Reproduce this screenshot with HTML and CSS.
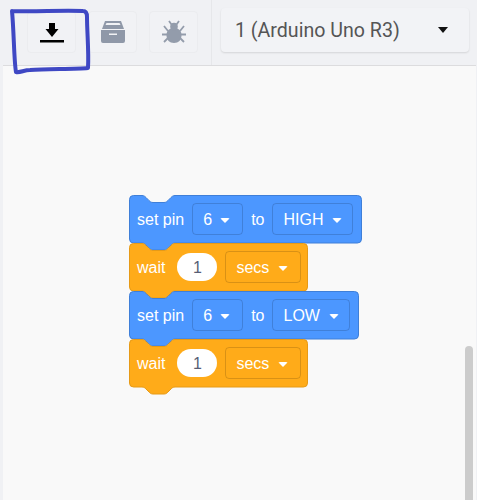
FILE: index.html
```html
<!DOCTYPE html>
<html lang="en">
<head>
    <meta charset="UTF-8">
    <title>Arduino Blocks</title>
    <link rel="stylesheet" href="styles.css">
</head>
<body>
    <div class="toolbar">
        <div class="tool-buttons">
            <button class="tool-button">
                <svg class="tool-icon" viewBox="0 0 24 24"><path fill="#000" d="M9 3h6v6h3.500l-6.500 8-6.500-8H9zM0 20h24v2.400H0z"/></svg>
            </button>
            <button class="tool-button">
                <svg class="tool-icon" viewBox="0 0 24 24"><path fill="#8f98a8" fill-rule="evenodd" d="M4 1h16l3 8H1zM5.500 3l-1 2h15l-1-2zM0 10h24v11a2 2 0 0 1-2 2H2a2 2 0 0 1-2-2zM8 13.500V15h8v-1.500z"/></svg>
            </button>
            <button class="tool-button">
                <svg class="tool-icon" viewBox="0 0 24 24"><g fill="#939cab"><path d="M12 8c5 0 7.500 3 7.500 7 0 5-3 8-7.500 8s-7.500-3-7.500-8c0-4 2.500-7 7.500-7z"/><circle cx="12" cy="6.500" r="3.800"/></g><path fill="none" stroke="#939cab" stroke-width="1.800" d="M7 1l2.500 3.500M17 1l-2.500 3.500M2 6l4 5M22 6l-4 5M0 14.500h6M24 14.500h-6M2 22l4-4M22 22l-4-4"/></svg>
            </button>
        </div>
        <div class="board-wrap">
            <div class="board-select">
                <span>1 (Arduino Uno R3)</span>
                <span class="board-caret"></span>
            </div>
        </div>
    </div>

    <div class="workspace">
        <div class="stack">
            <div class="block block-blue">
                <svg class="block-shape" width="233" height="56" viewBox="0 0 233 56"><path d="M4.500.5H13c2 0 3 1 4 2l3 3c1 1 2 2 4 2h11c2 0 3-1 4-2l3-3c1-1 2-2 4-2H228.500a4 4 0 0 1 4 4V44a4 4 0 0 1-4 4H46c-2 0-3 1-4 2l-3 3c-1 1-2 2-4 2H24c-2 0-3-1-4-2l-3-3c-1-1-2-2-4-2H4.500a4 4 0 0 1-4-4V4.500a4 4 0 0 1 4-4z"/></svg>
                <span class="block-text">set pin</span>
                <span class="field field-pin">6<i class="caret"></i></span>
                <span class="block-text">to</span>
                <span class="field">HIGH<i class="caret"></i></span>
            </div>
            <div class="block block-orange">
                <svg class="block-shape" width="179" height="56" viewBox="0 0 179 56"><path d="M4.500.5H13c2 0 3 1 4 2l3 3c1 1 2 2 4 2h11c2 0 3-1 4-2l3-3c1-1 2-2 4-2H174.500a4 4 0 0 1 4 4V44a4 4 0 0 1-4 4H46c-2 0-3 1-4 2l-3 3c-1 1-2 2-4 2H24c-2 0-3-1-4-2l-3-3c-1-1-2-2-4-2H4.500a4 4 0 0 1-4-4V4.500a4 4 0 0 1 4-4z"/></svg>
                <span class="block-text">wait</span>
                <span class="number">1</span>
                <span class="field field-secs">secs<i class="caret"></i></span>
            </div>
            <div class="block block-blue">
                <svg class="block-shape" width="230" height="56" viewBox="0 0 230 56"><path d="M4.500.5H13c2 0 3 1 4 2l3 3c1 1 2 2 4 2h11c2 0 3-1 4-2l3-3c1-1 2-2 4-2H225.500a4 4 0 0 1 4 4V44a4 4 0 0 1-4 4H46c-2 0-3 1-4 2l-3 3c-1 1-2 2-4 2H24c-2 0-3-1-4-2l-3-3c-1-1-2-2-4-2H4.500a4 4 0 0 1-4-4V4.500a4 4 0 0 1 4-4z"/></svg>
                <span class="block-text">set pin</span>
                <span class="field field-pin">6<i class="caret"></i></span>
                <span class="block-text">to</span>
                <span class="field">LOW<i class="caret"></i></span>
            </div>
            <div class="block block-orange">
                <svg class="block-shape" width="179" height="56" viewBox="0 0 179 56"><path d="M4.500.5H13c2 0 3 1 4 2l3 3c1 1 2 2 4 2h11c2 0 3-1 4-2l3-3c1-1 2-2 4-2H174.500a4 4 0 0 1 4 4V44a4 4 0 0 1-4 4H46c-2 0-3 1-4 2l-3 3c-1 1-2 2-4 2H24c-2 0-3-1-4-2l-3-3c-1-1-2-2-4-2H4.500a4 4 0 0 1-4-4V4.500a4 4 0 0 1 4-4z"/></svg>
                <span class="block-text">wait</span>
                <span class="number">1</span>
                <span class="field field-secs">secs<i class="caret"></i></span>
            </div>
        </div>
        <div class="scrollbar"></div>
    </div>

    <svg class="marker" width="100" height="80" viewBox="0 0 100 80"><path d="M12 11C35 12 60 10 83 11c3 0 4 2 4 6 0 15 2 35 1 51-12 1-40 1-58 2-6 0-10 3-14 2-2-10-2-40-4-61"/></svg>
</body>
</html>
```
FILE: styles.css
```css
body {
    margin: 0;
    height: 500px;
    overflow: hidden;
    background: #f0f1f4;
    font-family: "Liberation Sans", Arial, sans-serif;
}
.toolbar {
    display: flex;
    height: 65px;
    box-sizing: border-box;
}
.tool-buttons {
    display: flex;
    gap: 12px;
    padding: 11px 13px 0 27px;
    border-right: 1px solid #e6e7ea;
}
.tool-button {
    display: flex;
    align-items: center;
    justify-content: center;
    width: 49px;
    height: 42px;
    padding: 0;
    background: #f1f2f5;
    border: 1px solid #ebecef;
    border-radius: 4px;
}
.tool-icon {
    width: 24px;
    height: 24px;
}
.board-wrap {
    padding: 8px 9px 0 9px;
}
.board-select {
    display: flex;
    align-items: center;
    justify-content: space-between;
    box-sizing: border-box;
    width: 248px;
    height: 44px;
    padding: 0 21px 0 14px;
    background: #f2f3f6;
    border-radius: 4px;
    box-shadow: 0 1px 2px rgba(0, 0, 0, 0.12);
    font-family: Roboto, sans-serif;
    font-size: 19.6px;
    color: #555;
}
.board-caret {
    border-left: 5px solid transparent;
    border-right: 5px solid transparent;
    border-top: 6px solid #111;
}
.workspace {
    position: relative;
    height: 435px;
    margin-left: 3px;
    margin-right: 1px;
    padding: 129px 0 0 126px;
    box-sizing: border-box;
    background: #f9f9f9;
    border-top: 1px solid #dcdcde;
}
.stack {
    display: flex;
    flex-direction: column;
    align-items: flex-start;
}
.block {
    position: relative;
    display: flex;
    align-items: center;
    height: 48px;
    padding-left: 8px;
    color: white;
    font-size: 16px;
}
.block-shape {
    position: absolute;
    top: 0;
    left: 0;
    overflow: visible;
}
.block-blue .block-shape path {
    fill: #4c97ff;
    stroke: #3f7fd8;
}
.block-orange .block-shape path {
    fill: #ffab19;
    stroke: #e69a17;
}
.block-text {
    position: relative;
    padding-top: 2px;
}
.field {
    position: relative;
    display: flex;
    align-items: center;
    gap: 9px;
    box-sizing: border-box;
    height: 32px;
    padding: 2px 10px 0;
    margin-left: 8px;
    border-radius: 4px;
    border: 1px solid rgba(0, 0, 0, 0.15);
}
.field-pin {
    gap: 8px;
    margin-right: 8px;
    width: 51px;
}
.field-secs {
    width: 76px;
}
.caret {
    border-left: 5px solid transparent;
    border-right: 5px solid transparent;
    border-top: 5px solid white;
    border-radius: 2px;
}
.number {
    position: relative;
    width: 40px;
    height: 28px;
    line-height: 29px;
    margin-left: 12px;
    text-align: center;
    color: #575e75;
    background: white;
    border-radius: 14px;
}
.scrollbar {
    position: absolute;
    right: 3px;
    bottom: 0;
    width: 8px;
    height: 154px;
    background: #cccccc;
    border-radius: 4px 4px 0 0;
}
.marker {
    position: absolute;
    top: 0;
    left: 0;
}
.marker path {
    fill: none;
    stroke: #3f48c4;
    stroke-width: 4;
    stroke-linecap: round;
    stroke-linejoin: round;
}
```
